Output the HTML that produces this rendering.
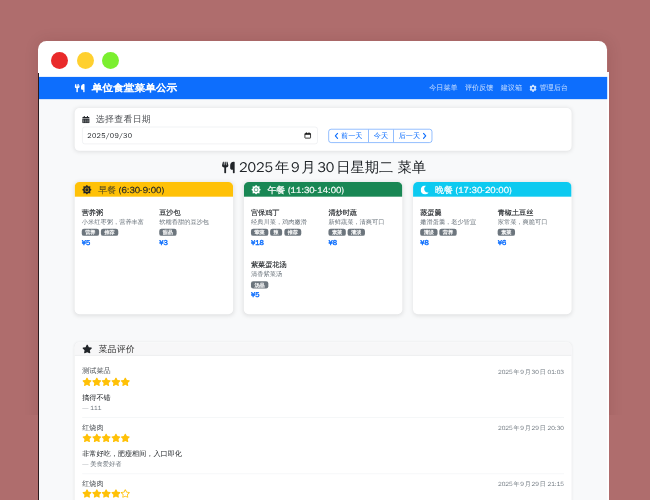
<!DOCTYPE html>
<html lang="zh-CN">
<head>
<meta charset="utf-8">
<title>单位食堂菜单公示</title>
<style>
*{box-sizing:border-box;margin:0;padding:0}
html,body{width:650px;height:500px;overflow:hidden}
body{background:#af6d6d;position:relative;font-family:"WenQuanYi Zen Hei","Liberation Sans",sans-serif}
#shade{position:absolute;left:0;top:0;width:650px;height:415px;overflow:hidden}
#shade i{position:absolute;left:39px;top:42px;width:569px;height:480px;border-radius:8px;box-shadow:0 0 14px 2px rgba(60,10,10,.1)}
#bar{position:absolute;left:38.4px;top:41px;width:568.5px;height:40px;background:#fff;border-radius:8.5px 8.5px 0 0}
#bar b{position:absolute;top:10.6px;width:17px;height:17px;border-radius:50%}
#edge{position:absolute;left:37.8px;top:72.6px;width:1px;height:430px;background:#2a1a1c}
#clip{filter:blur(.5px);position:absolute;left:38.8px;top:72px;width:570.1px;height:428px;overflow:hidden;background:#f8f9fa}
#pg{text-autospace:normal;position:absolute;left:0;top:0;width:1281px;height:962px;transform:scale(.4453);transform-origin:0 0;background:#f8f9fa;color:#212529;font-size:16px;line-height:1.5}
svg{display:block}
.abs{position:absolute}
#top{left:0;top:0;width:1281px;height:61.3px;background:#fff}
#strip{left:1276px;top:0;width:6px;height:962px;background:#fff}
#nav{left:0;top:10.8px;width:1276px;height:50.5px;background:#0d6efd;color:#fff}
#brand{left:80px;top:0;height:50.5px;display:flex;align-items:center;font-size:24px;font-weight:400;-webkit-text-stroke:1.3px #fff;white-space:nowrap}
#brand svg{margin-right:16px}
#brand span{display:inline-block;transform:scaleY(.89)}
#links{right:80px;top:0;height:50.5px;display:flex;align-items:center;font-size:16px;color:rgba(255,255,255,.78);white-space:nowrap}
#links span{padding:0 8.2px;display:flex;align-items:center}
#links svg{margin-right:5.5px}
.card{position:absolute;background:#fff;border-radius:11px;box-shadow:0 2px 10px rgba(0,0,0,.1)}
#datecard{left:80px;top:81px;width:1116px;height:96px}
#lbl{left:17px;top:14.5px;letter-spacing:.7px;height:22px;display:flex;align-items:center;font-size:20px;color:#505357;white-space:nowrap;font-family:"WenQuanYi Zen Hei","Noto Sans CJK SC",sans-serif;font-weight:400}
#lbl svg{margin-right:14px}
#inp{left:17px;top:42px;width:529px;height:39px;border:1px solid #dee2e6;border-radius:6px;display:flex;align-items:center;padding:0 13.5px 0 10.5px;font-size:16px;color:#212529;justify-content:space-between}
#inp span{letter-spacing:.75px}
#grp{left:570px;top:46.5px;height:31px;display:flex;border:1px solid #0d6efd;border-radius:6px;color:#0d6efd;font-size:16px;white-space:nowrap;overflow:hidden}
#grp span{display:flex;align-items:center;justify-content:center;height:100%}
#grp span+span{border-left:1px solid #0d6efd}
#h2{left:2px;top:191.5px;width:1276px;height:44px;display:flex;align-items:center;justify-content:center;font-size:32px;color:#212529;white-space:nowrap}
#h2 svg{margin-right:9.5px;position:relative;top:.5px}
.meal{top:247.2px;width:356px;height:297.3px;overflow:hidden}
.mh{height:32.8px;display:flex;align-items:center;padding:2px 0 0 17px;font-size:20px;white-space:nowrap}
.mh svg{margin-right:15px}
.mh em{font-style:normal;font-family:"WenQuanYi Zen Hei","Noto Sans CJK SC",sans-serif;font-weight:500;margin-right:6px}
.it{position:absolute;width:170px;white-space:nowrap}
.it h6{font-size:16px;font-weight:400;-webkit-text-stroke:.3px #212529;line-height:20px;color:#212529}
.it p{font-size:14px;line-height:20px;color:#6c757d}
.it .bd{display:flex;height:16px;margin-top:5.5px}
.it .bd span{display:block;height:16px;line-height:16px;font-size:11.5px;font-weight:400;-webkit-text-stroke:.45px #fff;color:#fff;background:#6c757d;border-radius:5px;padding:0 7.8px;margin-right:4.5px}
.it .pr{font-size:16px;font-weight:400;-webkit-text-stroke:.9px #0d6efd;color:#0d6efd;line-height:20px;margin-top:4.5px}
#rev{left:80px;top:607px;width:1116px;height:400px;border-radius:11px;box-shadow:0 1px 6px rgba(0,0,0,.07)}
#rh{left:0;top:0;width:1116px;height:29.500px;background:#f7f7f8;border-bottom:2px solid #e1e2e4;border-radius:11px 11px 0 0;display:flex;align-items:center;padding:2.5px 0 0 17px;letter-spacing:.5px;font-size:20px;color:#333;white-space:nowrap;font-family:"WenQuanYi Zen Hei","Noto Sans CJK SC",sans-serif;font-weight:500}
#rh svg{margin-right:14px}
.rv{position:absolute;left:17px;width:1082px;height:114.5px;border-bottom:1px solid #e9ecef}
.rv h6{position:absolute;left:0;top:0;font-size:16px;font-weight:500;line-height:20px;color:#4a4f54;font-family:"WenQuanYi Zen Hei","Noto Sans CJK SC",sans-serif}
.rv .st{position:absolute;left:0;top:23.5px;display:flex}
.rv .st svg{margin-right:0}
.rv .cm{position:absolute;left:0;top:59px;font-size:16px;line-height:20px;color:#212529}
.rv .au{position:absolute;left:0;top:84px;font-size:14px;line-height:18px;color:#6c757d}
.rv .dt{position:absolute;right:0;top:2.5px;font-size:13.7px;line-height:18px;color:#6c757d}
</style>
</head>
<body>
<div id="shade"><i></i></div>
<div id="bar"><b style="left:13px;background:#e92a2a"></b><b style="left:38.6px;background:#ffd02f"></b><b style="left:64.1px;background:#7bef2f"></b></div>
<div id="edge"></div>
<div id="clip"><div id="pg">
<div id="top" class="abs"></div><div id="strip" class="abs"></div>
<div id="nav" class="abs">
  <div id="brand" class="abs"><svg width="22.5" height="19" viewBox="0 0 448 512" preserveAspectRatio="none"><path fill="#fff" d="M416 0C400 0 288 32 288 176V288c0 35.300 28.700 64 64 64h32V480c0 17.700 14.300 32 32 32s32-14.300 32-32V352 240 32c0-17.700-14.300-32-32-32zM64 16C64 7.800 57.900 1 49.700 .1S34.200 4.600 32.400 12.500L2.100 148.800C.7 155.100 0 161.500 0 167.900c0 45.900 35.100 83.600 80 87.700V480c0 17.700 14.300 32 32 32s32-14.300 32-32V255.600c44.900-4.100 80-41.800 80-87.700c0-6.400-.7-12.800-2.100-19.100L191.600 12.500c-1.800-8-9.300-13.300-17.400-12.400S160 7.800 160 16V150.200c0 5.400-4.400 9.800-9.800 9.800c-5.100 0-9.300-3.900-9.800-9L127.900 14.600C127.200 6.300 120.300 0 112 0s-15.200 6.300-15.900 14.600L83.700 151c-.5 5.100-4.700 9-9.800 9c-5.400 0-9.800-4.400-9.800-9.800V16z"/></svg><span>单位食堂菜单公示</span></div>
  <div id="links" class="abs"><span>今日菜单</span><span>评价反馈</span><span>建议箱</span><span><svg width="17" height="17" viewBox="0 0 512 512"><path fill="rgba(255,255,255,.8)" d="M487.400 315.700l-42.600-24.600c4.300-23.200 4.300-47 0-70.200l42.600-24.600c4.900-2.800 7.100-8.600 5.500-14-11.100-35.600-30-67.800-54.700-94.600-3.800-4.100-10-5.100-14.800-2.300L380.800 110c-17.900-15.400-38.500-27.300-60.800-35.100V25.800c0-5.600-3.900-10.500-9.400-11.700-36.700-8.200-74.300-7.800-109.200 0-5.500 1.200-9.400 6.100-9.400 11.700V75c-22.200 7.900-42.800 19.800-60.800 35.100L88.700 85.500c-4.900-2.800-11-1.900-14.800 2.300-24.700 26.700-43.600 58.900-54.700 94.600-1.700 5.400.6 11.200 5.500 14L67.300 221c-4.300 23.200-4.300 47 0 70.200l-42.600 24.600c-4.900 2.800-7.100 8.600-5.500 14 11.100 35.600 30 67.800 54.700 94.600 3.800 4.100 10 5.100 14.800 2.300l42.600-24.600c17.900 15.400 38.500 27.300 60.800 35.100v49.200c0 5.600 3.900 10.500 9.400 11.700 36.700 8.200 74.300 7.800 109.200 0 5.500-1.200 9.400-6.100 9.400-11.700v-49.200c22.200-7.900 42.800-19.800 60.800-35.100l42.600 24.600c4.900 2.800 11 1.900 14.800-2.300 24.700-26.700 43.600-58.900 54.700-94.600 1.500-5.500-.7-11.300-5.600-14.100zM256 336c-44.100 0-80-35.900-80-80s35.900-80 80-80 80 35.900 80 80-35.900 80-80 80z"/></svg>管理后台</span></div>
</div>

<div id="datecard" class="card">
  <div id="lbl" class="abs"><svg width="16.5" height="16" viewBox="0 0 448 512" preserveAspectRatio="none"><path fill="#212529" d="M0 464c0 26.500 21.500 48 48 48h352c26.500 0 48-21.500 48-48V192H0v272zm320-196c0-6.600 5.400-12 12-12h40c6.600 0 12 5.400 12 12v40c0 6.600-5.400 12-12 12h-40c-6.600 0-12-5.400-12-12v-40zm0 128c0-6.600 5.400-12 12-12h40c6.600 0 12 5.400 12 12v40c0 6.600-5.400 12-12 12h-40c-6.600 0-12-5.400-12-12v-40zM192 268c0-6.600 5.400-12 12-12h40c6.600 0 12 5.400 12 12v40c0 6.600-5.400 12-12 12h-40c-6.600 0-12-5.400-12-12v-40zm0 128c0-6.600 5.400-12 12-12h40c6.600 0 12 5.400 12 12v40c0 6.600-5.400 12-12 12h-40c-6.600 0-12-5.400-12-12v-40zM64 268c0-6.600 5.400-12 12-12h40c6.600 0 12 5.400 12 12v40c0 6.600-5.400 12-12 12H76c-6.600 0-12-5.400-12-12v-40zm0 128c0-6.600 5.400-12 12-12h40c6.600 0 12 5.400 12 12v40c0 6.600-5.400 12-12 12H76c-6.600 0-12-5.400-12-12v-40zM400 64h-48V16c0-8.800-7.200-16-16-16h-32c-8.800 0-16 7.200-16 16v48H160V16c0-8.800-7.200-16-16-16h-32c-8.800 0-16 7.200-16 16v48H48C21.500 64 0 85.500 0 112v48h448v-48c0-26.500-21.500-48-48-48z"/></svg>选择查看日期</div>
  <div id="inp" class="abs"><span>2025/09/30</span><svg width="17" height="17" viewBox="0 0 24 24"><path fill="none" stroke="#111" stroke-width="2.6" d="M4.500 5.500h15a1.500 1.500 0 0 1 1.500 1.500v12a1.500 1.500 0 0 1-1.500 1.500h-15a1.500 1.500 0 0 1-1.500-1.500v-12a1.500 1.500 0 0 1 1.500-1.500z"/><path fill="#111" d="M3 5.500h18v4.500H3zM6.500 2.500h3v4h-3zM14.500 2.500h3v4h-3z"/></svg></div>
  <div id="grp" class="abs"><span style="width:87.8px"><svg width="10" height="15" viewBox="0 0 10 15" style="margin-right:5px"><path fill="none" stroke="#0d6efd" stroke-width="2.600" stroke-linecap="round" stroke-linejoin="round" d="M7.500 2L2.500 7.500l5 5.500"/></svg>前一天</span><span style="width:57.2px">今天</span><span style="width:85.8px">后一天<svg width="10" height="15" viewBox="0 0 10 15" style="margin-left:5px"><path fill="none" stroke="#0d6efd" stroke-width="2.600" stroke-linecap="round" stroke-linejoin="round" d="M2.500 2l5 5.500-5 5.500"/></svg></span></div>
</div>

<div id="h2" class="abs"><svg width="28.500" height="27" viewBox="0 0 448 512" preserveAspectRatio="none"><path fill="#212529" d="M416 0C400 0 288 32 288 176V288c0 35.300 28.700 64 64 64h32V480c0 17.700 14.300 32 32 32s32-14.300 32-32V352 240 32c0-17.700-14.300-32-32-32zM64 16C64 7.800 57.900 1 49.700 .1S34.200 4.600 32.400 12.500L2.100 148.800C.7 155.100 0 161.500 0 167.900c0 45.900 35.100 83.600 80 87.700V480c0 17.700 14.300 32 32 32s32-14.300 32-32V255.600c44.900-4.100 80-41.800 80-87.700c0-6.400-.7-12.800-2.100-19.100L191.600 12.500c-1.800-8-9.300-13.300-17.400-12.400S160 7.800 160 16V150.200c0 5.400-4.400 9.800-9.800 9.800c-5.100 0-9.300-3.900-9.800-9L127.900 14.600C127.200 6.300 120.300 0 112 0s-15.200 6.300-15.900 14.600L83.700 151c-.5 5.100-4.700 9-9.800 9c-5.400 0-9.800-4.400-9.800-9.800V16z"/></svg>2025年9月30日星期二 菜单</div>

<!--GEN-->
<div class="card meal" style="left:80px"><div class="mh" style="background:#ffc107;color:#212529;-webkit-text-stroke:.45px #212529"><svg width="21" height="21" viewBox="0 0 512 512"><path fill="#212529" fill-rule="evenodd" stroke="#212529" stroke-width="14" stroke-linejoin="round" d="M256 -6 L328 82 L441 71 L430 184 L518 256 L430 328 L441 441 L328 430 L256 518 L184 430 L71 441 L82 328 L-6 256 L82 184 L71 71 L184 82ZM134 256a122 122 0 1 0 244 0a122 122 0 1 0 -244 0ZM174 256a82 82 0 1 0 164 0a82 82 0 1 0 -164 0Z"/></svg><em style="-webkit-text-stroke:0;opacity:.8">早餐</em>(6:30-9:00)</div>
<div class="it" style="left:16px;top:59.5px"><h6>营养粥</h6><p>小米红枣粥，营养丰富</p><div class="bd"><span>营养</span><span>推荐</span></div><div class="pr">¥5</div></div>
<div class="it" style="left:190px;top:59.5px"><h6>豆沙包</h6><p>软糯香甜的豆沙包</p><div class="bd"><span>甜品</span></div><div class="pr">¥3</div></div>
</div>
<div class="card meal" style="left:460px"><div class="mh" style="background:#198754;color:#fff;-webkit-text-stroke:.45px #fff"><svg width="21" height="21" viewBox="0 0 512 512"><path fill="#fff" fill-rule="evenodd" stroke="#fff" stroke-width="14" stroke-linejoin="round" d="M256 -6 L328 82 L441 71 L430 184 L518 256 L430 328 L441 441 L328 430 L256 518 L184 430 L71 441 L82 328 L-6 256 L82 184 L71 71 L184 82ZM134 256a122 122 0 1 0 244 0a122 122 0 1 0 -244 0ZM174 256a82 82 0 1 0 164 0a82 82 0 1 0 -164 0Z"/></svg><em>午餐</em>(11:30-14:00)</div>
<div class="it" style="left:16px;top:59.5px"><h6>宫保鸡丁</h6><p>经典川菜，鸡肉嫩滑</p><div class="bd"><span>荤菜</span><span>辣</span><span>推荐</span></div><div class="pr">¥18</div></div>
<div class="it" style="left:190px;top:59.5px"><h6>清炒时蔬</h6><p>新鲜蔬菜，清爽可口</p><div class="bd"><span>素菜</span><span>清淡</span></div><div class="pr">¥8</div></div>
<div class="it" style="left:16px;top:176.9px"><h6>紫菜蛋花汤</h6><p>清香紫菜汤</p><div class="bd"><span>汤品</span></div><div class="pr">¥5</div></div>
</div>
<div class="card meal" style="left:840px"><div class="mh" style="background:#0dcaf0;color:#fff;-webkit-text-stroke:.45px #fff"><svg width="18" height="20" viewBox="27 0 460 512" style="margin-right:14.5px"><path fill="#fff" d="M283.211 512c78.962 0 151.079-35.925 198.857-94.792 7.068-8.708-.639-21.430-11.562-19.350-124.203 23.654-238.262-71.576-238.262-196.954 0-72.222 38.662-138.635 101.498-174.394 9.686-5.512 7.250-20.197-3.756-22.230A258.156 258.156 0 0 0 283.211 0c-141.309 0-256 114.511-256 256 0 141.309 114.511 256 256 256z"/></svg><em>晚餐</em>(17:30-20:00)</div>
<div class="it" style="left:16px;top:59.5px"><h6>蒸蛋羹</h6><p>嫩滑蛋羹，老少皆宜</p><div class="bd"><span>清淡</span><span>营养</span></div><div class="pr">¥8</div></div>
<div class="it" style="left:190px;top:59.5px"><h6>青椒土豆丝</h6><p>家常菜，爽脆可口</p><div class="bd"><span>素菜</span></div><div class="pr">¥6</div></div>
</div>
<div id="rev" class="card"><div id="rh" class="abs"><svg width="22.5" height="20" viewBox="0 0 576 512"><path fill="#212529" d="M259.300 17.800L194 150.200 47.900 171.500c-26.200 3.800-36.700 36.100-17.700 54.600l105.700 103-25 145.500c-4.500 26.300 23.200 46 46.400 33.700L288 439.600l130.700 68.700c23.200 12.200 50.900-7.400 46.400-33.700l-25-145.500 105.700-103c19-18.500 8.500-50.800-17.700-54.600L382 150.200 316.700 17.800c-11.700-23.600-45.600-23.900-57.400 0z"/></svg>菜品评价</div>
<div class="rv" style="top:55.4px"><h6>测试菜品</h6><div class="st"><svg width="21.6" height="19.2" viewBox="0 0 576 512"><path fill="#ffc107" d="M259.300 17.800L194 150.200 47.900 171.500c-26.200 3.800-36.700 36.100-17.700 54.600l105.700 103-25 145.500c-4.500 26.300 23.200 46 46.400 33.700L288 439.600l130.700 68.700c23.200 12.200 50.900-7.400 46.400-33.700l-25-145.500 105.700-103c19-18.500 8.500-50.800-17.700-54.600L382 150.200 316.700 17.800c-11.700-23.600-45.600-23.900-57.400 0z"/></svg><svg width="21.6" height="19.2" viewBox="0 0 576 512"><path fill="#ffc107" d="M259.300 17.800L194 150.200 47.900 171.500c-26.200 3.800-36.700 36.100-17.700 54.600l105.700 103-25 145.500c-4.500 26.300 23.200 46 46.400 33.700L288 439.600l130.700 68.700c23.200 12.200 50.900-7.400 46.400-33.700l-25-145.500 105.700-103c19-18.500 8.500-50.800-17.700-54.600L382 150.200 316.700 17.800c-11.700-23.600-45.600-23.900-57.400 0z"/></svg><svg width="21.6" height="19.2" viewBox="0 0 576 512"><path fill="#ffc107" d="M259.300 17.800L194 150.200 47.900 171.500c-26.200 3.800-36.700 36.100-17.700 54.600l105.700 103-25 145.500c-4.500 26.300 23.200 46 46.400 33.700L288 439.600l130.700 68.700c23.200 12.200 50.900-7.400 46.400-33.700l-25-145.500 105.700-103c19-18.500 8.500-50.800-17.700-54.600L382 150.200 316.700 17.800c-11.700-23.600-45.600-23.900-57.400 0z"/></svg><svg width="21.6" height="19.2" viewBox="0 0 576 512"><path fill="#ffc107" d="M259.300 17.800L194 150.200 47.900 171.500c-26.200 3.800-36.700 36.100-17.700 54.600l105.700 103-25 145.500c-4.500 26.300 23.200 46 46.400 33.700L288 439.600l130.700 68.700c23.200 12.200 50.900-7.400 46.400-33.700l-25-145.500 105.700-103c19-18.500 8.500-50.800-17.700-54.600L382 150.200 316.700 17.800c-11.700-23.600-45.600-23.900-57.400 0z"/></svg><svg width="21.6" height="19.2" viewBox="0 0 576 512"><path fill="#ffc107" d="M259.300 17.800L194 150.200 47.900 171.500c-26.200 3.800-36.700 36.100-17.700 54.600l105.700 103-25 145.500c-4.500 26.300 23.200 46 46.400 33.700L288 439.600l130.700 68.700c23.200 12.200 50.900-7.400 46.400-33.700l-25-145.500 105.700-103c19-18.500 8.500-50.800-17.700-54.600L382 150.200 316.700 17.800c-11.700-23.600-45.600-23.900-57.400 0z"/></svg></div><div class="cm">搞得不错</div><div class="au">— 111</div><div class="dt">2025年9月30日 01:03</div></div>
<div class="rv" style="top:181.1px"><h6>红烧肉</h6><div class="st"><svg width="21.6" height="19.2" viewBox="0 0 576 512"><path fill="#ffc107" d="M259.300 17.800L194 150.200 47.900 171.500c-26.200 3.800-36.700 36.100-17.700 54.600l105.700 103-25 145.500c-4.500 26.300 23.200 46 46.400 33.700L288 439.600l130.700 68.700c23.200 12.200 50.900-7.400 46.400-33.700l-25-145.500 105.700-103c19-18.500 8.500-50.800-17.700-54.600L382 150.200 316.700 17.800c-11.700-23.600-45.600-23.900-57.400 0z"/></svg><svg width="21.6" height="19.2" viewBox="0 0 576 512"><path fill="#ffc107" d="M259.300 17.800L194 150.200 47.900 171.500c-26.200 3.800-36.700 36.100-17.700 54.600l105.700 103-25 145.500c-4.500 26.300 23.200 46 46.400 33.700L288 439.600l130.700 68.700c23.200 12.200 50.900-7.400 46.400-33.700l-25-145.500 105.700-103c19-18.500 8.500-50.800-17.700-54.600L382 150.200 316.700 17.800c-11.700-23.600-45.600-23.900-57.400 0z"/></svg><svg width="21.6" height="19.2" viewBox="0 0 576 512"><path fill="#ffc107" d="M259.300 17.800L194 150.200 47.900 171.500c-26.200 3.800-36.700 36.100-17.700 54.600l105.700 103-25 145.500c-4.500 26.300 23.200 46 46.400 33.700L288 439.600l130.700 68.700c23.200 12.200 50.900-7.400 46.400-33.700l-25-145.500 105.700-103c19-18.500 8.500-50.800-17.700-54.600L382 150.200 316.700 17.800c-11.700-23.600-45.600-23.900-57.400 0z"/></svg><svg width="21.6" height="19.2" viewBox="0 0 576 512"><path fill="#ffc107" d="M259.300 17.800L194 150.200 47.900 171.500c-26.200 3.800-36.700 36.100-17.700 54.600l105.700 103-25 145.500c-4.500 26.300 23.200 46 46.400 33.700L288 439.600l130.700 68.700c23.200 12.200 50.900-7.400 46.400-33.700l-25-145.500 105.700-103c19-18.500 8.500-50.800-17.700-54.600L382 150.200 316.700 17.800c-11.700-23.600-45.600-23.900-57.400 0z"/></svg><svg width="21.6" height="19.2" viewBox="0 0 576 512"><path fill="#ffc107" d="M259.300 17.800L194 150.200 47.900 171.500c-26.200 3.800-36.700 36.100-17.700 54.600l105.700 103-25 145.500c-4.500 26.300 23.200 46 46.400 33.700L288 439.600l130.700 68.700c23.200 12.200 50.900-7.400 46.400-33.700l-25-145.500 105.700-103c19-18.500 8.500-50.800-17.700-54.600L382 150.200 316.700 17.800c-11.700-23.600-45.600-23.900-57.400 0z"/></svg></div><div class="cm">非常好吃，肥瘦相间，入口即化</div><div class="au">— 美食爱好者</div><div class="dt">2025年9月29日 20:30</div></div>
<div class="rv" style="top:306.8px"><h6>红烧肉</h6><div class="st"><svg width="21.6" height="19.2" viewBox="0 0 576 512"><path fill="#ffc107" d="M259.300 17.800L194 150.200 47.900 171.500c-26.200 3.800-36.700 36.100-17.700 54.600l105.700 103-25 145.500c-4.500 26.300 23.200 46 46.400 33.700L288 439.600l130.700 68.700c23.200 12.200 50.900-7.400 46.400-33.700l-25-145.500 105.700-103c19-18.500 8.500-50.800-17.700-54.600L382 150.200 316.700 17.800c-11.700-23.600-45.600-23.900-57.400 0z"/></svg><svg width="21.6" height="19.2" viewBox="0 0 576 512"><path fill="#ffc107" d="M259.300 17.800L194 150.200 47.900 171.500c-26.200 3.800-36.700 36.100-17.700 54.600l105.700 103-25 145.500c-4.500 26.300 23.200 46 46.400 33.700L288 439.600l130.700 68.700c23.200 12.200 50.900-7.400 46.400-33.700l-25-145.500 105.700-103c19-18.500 8.500-50.800-17.700-54.600L382 150.200 316.700 17.800c-11.700-23.600-45.600-23.900-57.400 0z"/></svg><svg width="21.6" height="19.2" viewBox="0 0 576 512"><path fill="#ffc107" d="M259.300 17.800L194 150.200 47.900 171.500c-26.200 3.800-36.700 36.100-17.700 54.600l105.700 103-25 145.500c-4.500 26.300 23.200 46 46.400 33.700L288 439.600l130.700 68.700c23.200 12.200 50.900-7.400 46.400-33.700l-25-145.500 105.700-103c19-18.500 8.500-50.800-17.700-54.600L382 150.200 316.700 17.800c-11.700-23.600-45.600-23.900-57.400 0z"/></svg><svg width="21.6" height="19.2" viewBox="0 0 576 512"><path fill="#ffc107" d="M259.300 17.800L194 150.200 47.900 171.500c-26.200 3.800-36.700 36.100-17.700 54.600l105.700 103-25 145.500c-4.500 26.300 23.200 46 46.400 33.700L288 439.600l130.700 68.700c23.200 12.200 50.900-7.400 46.400-33.700l-25-145.500 105.700-103c19-18.500 8.500-50.800-17.700-54.600L382 150.200 316.700 17.800c-11.700-23.600-45.600-23.900-57.400 0z"/></svg><svg width="21.6" height="19.2" viewBox="0 0 576 512"><path fill="#ffc107" d="M528.100 171.500L382 150.200 316.700 17.800c-11.700-23.600-45.600-23.900-57.400 0L194 150.200 47.900 171.500c-26.200 3.800-36.700 36.100-17.700 54.600l105.700 103-25 145.500c-4.500 26.300 23.200 46 46.400 33.700L288 439.600l130.700 68.700c23.200 12.200 50.900-7.400 46.400-33.700l-25-145.500 105.700-103c19-18.500 8.500-50.800-17.700-54.600zM388.600 312.300l23.700 138.400L288 385.400l-124.300 65.300 23.700-138.400-100.600-98 139-20.200 62.200-126 62.200 126 139 20.200-100.600 98z"/></svg></div><div class="cm">味道不错，就是有点咸</div><div class="au">— 张三</div><div class="dt">2025年9月29日 21:15</div></div>
</div>
<!--/GEN-->
</div></div>
</body>
</html>
